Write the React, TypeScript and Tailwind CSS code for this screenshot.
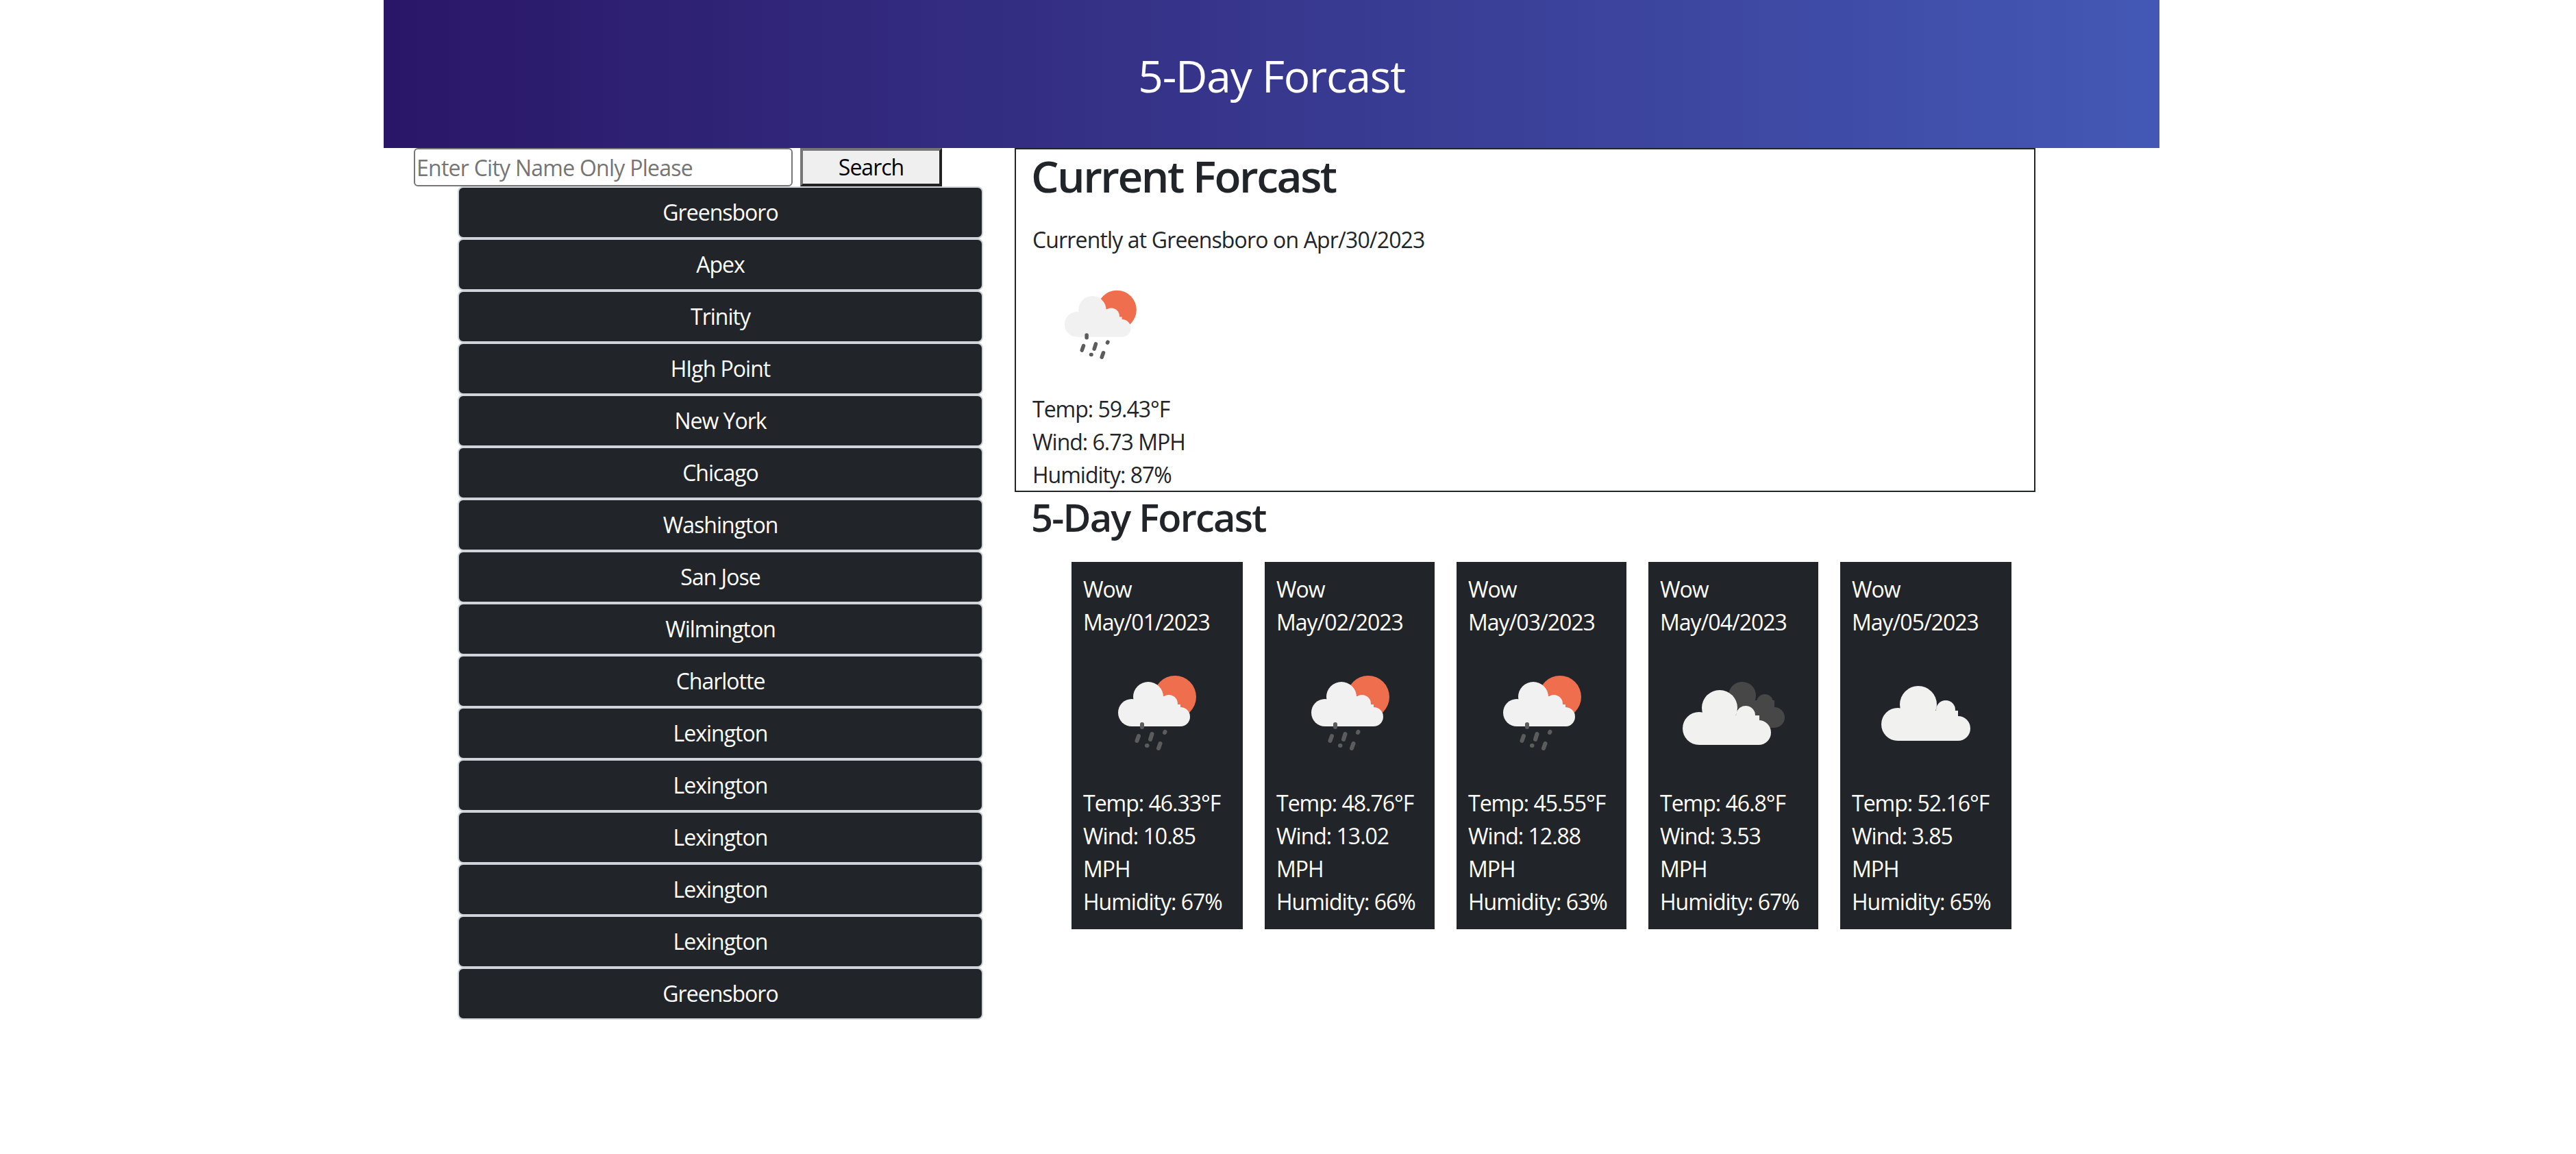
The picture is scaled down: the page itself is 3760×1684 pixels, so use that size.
import React from "react";

const cities = [
  "Greensboro",
  "Apex",
  "Trinity",
  "HIgh Point",
  "New York",
  "Chicago",
  "Washington",
  "San Jose",
  "Wilmington",
  "Charlotte",
  "Lexington",
  "Lexington",
  "Lexington",
  "Lexington",
  "Lexington",
  "Greensboro",
];

const days = [
  { date: "May/01/2023", icon: "rain", temp: "46.33", wind: "10.85", humidity: "67", width: "w-[250px]" },
  { date: "May/02/2023", icon: "rain", temp: "48.76", wind: "13.02", humidity: "66", width: "w-[248px]" },
  { date: "May/03/2023", icon: "rain", temp: "45.55", wind: "12.88", humidity: "63", width: "w-[248px]" },
  { date: "May/04/2023", icon: "broken", temp: "46.8", wind: "3.53", humidity: "67", width: "w-[248px]" },
  { date: "May/05/2023", icon: "scattered", temp: "52.16", wind: "3.85", humidity: "65", width: "w-[250px]" },
];

function RainIcon({ className = "w-[200px] h-[200px]" }: { className?: string }) {
  return (
    <svg viewBox="0 0 200 200" className={`block ${className}`}>
      <circle cx="134" cy="85" r="31" fill="#ee6e4d" />
      <g fill="#f1f1f1">
        <circle cx="71" cy="108" r="20" />
        <circle cx="95" cy="85" r="22" />
        <circle cx="125" cy="95" r="13" />
        <circle cx="142" cy="114" r="14" />
        <rect x="71" y="96" width="71" height="32" />
        <rect x="85" y="84" width="38" height="20" />
      </g>
      <g stroke="#5c5c5c" strokeWidth="6" strokeLinecap="round">
        <line x1="86" y1="125" x2="86" y2="129" />
        <line x1="78.5" y1="149" x2="81" y2="142" />
        <line x1="98" y1="147" x2="100.5" y2="139" />
        <line x1="119" y1="137" x2="119.5" y2="136" />
        <line x1="93" y1="156" x2="93.5" y2="156" />
        <line x1="110" y1="160" x2="112.5" y2="153" />
      </g>
    </svg>
  );
}

function BrokenIcon() {
  return (
    <svg viewBox="0 0 200 200" className="block w-[200px] h-[200px]">
      <g fill="#474747">
        <circle cx="120" cy="83" r="20" />
        <circle cx="153" cy="93" r="12" />
        <circle cx="167" cy="115" r="15" />
        <rect x="120" y="90" width="47" height="40" />
      </g>
      <g fill="#f1f1f0">
        <circle cx="57" cy="131" r="24" />
        <circle cx="87" cy="101" r="26" />
        <circle cx="125" cy="112" r="14" />
        <circle cx="144" cy="137" r="18" />
        <rect x="57" y="112" width="88" height="43" />
      </g>
    </svg>
  );
}

function ScatteredIcon() {
  return (
    <svg viewBox="0 0 200 200" className="block w-[200px] h-[200px]">
      <g fill="#f1f1f0">
        <circle cx="67" cy="125" r="24" />
        <circle cx="97" cy="96" r="27" />
        <circle cx="137" cy="104" r="14" />
        <circle cx="155" cy="131" r="18" />
        <rect x="67" y="105" width="88" height="44" />
      </g>
    </svg>
  );
}

function WeatherIcon({ icon }: { icon: string }) {
  if (icon === "broken") return <BrokenIcon />;
  if (icon === "scattered") return <ScatteredIcon />;
  return <RainIcon />;
}

export default function App() {
  return (
    <div className="min-h-[1684px] bg-white font-['Open_Sans',sans-serif] text-[32px] leading-[48px] text-[#212529] tracking-[-1px]">
      <div className="ml-[560px] w-[2592px]">
        <header className="h-[216px] flex items-center justify-center bg-gradient-to-r from-[#2a1668] to-[#4358b5]">
          <h1 className="text-[64px] leading-[77px] text-white pt-[4px] tracking-[-1.2px]">5-Day Forcast</h1>
        </header>

        <div className="flex">
          <aside className="w-[921px] shrink-0">
            <div className="flex gap-[11px] pl-[44px] h-[56px]">
              <input
                placeholder="Enter City Name Only Please"
                className="w-[553px] h-[56px] px-[2px] border-2 border-[#767676] rounded-[6px] text-[32px] tracking-[-0.75px] text-black outline-none placeholder:text-[#757575]"
              />
              <button className="w-[207px] h-[56px] bg-[#efefef] text-black border-4 border-t-[#767676] border-l-[#767676] border-r-[#222] border-b-[#222] leading-[40px]">
                Search
              </button>
            </div>
            <ul className="ml-[108px] w-[767px]">
              {cities.map((city, i) => (
                <li key={i}>
                  <button className="block w-full h-[76px] bg-[#212529] text-white border-2 border-[#ced4da] rounded-[8px]">
                    {city}
                  </button>
                </li>
              ))}
            </ul>
          </aside>

          <main className="w-[1490px]">
            <section className="h-[502px] border-2 border-[#212529] px-[24px]">
              <h2 className="-ml-[2px] text-[64px] leading-[77px] font-semibold tracking-[-2.5px] mb-[31px]">Current Forcast</h2>
              <p className="tracking-[-0.85px]">Currently at Greensboro on Apr/30/2023</p>
              <div className="h-[199px]">
                <RainIcon className="w-[184px] h-[184px]" />
              </div>
              <p>Temp: 59.43°F</p>
              <p>Wind: 6.73 MPH</p>
              <p>Humidity: 87%</p>
            </section>

            <h3 className="px-[24px] text-[56px] leading-[67px] font-semibold tracking-[-1.8px] mt-[3px] mb-[32px]">5-Day Forcast</h3>

            <div className="flex gap-[32px] ml-[83px]">
              {days.map((day) => (
                <div key={day.date} className={`${day.width} h-[536px] bg-[#212529] text-white p-[16px] pl-[17px]`}>
                  <p>Wow</p>
                  <p>{day.date}</p>
                  <div className="h-[216px]">
                    <WeatherIcon icon={day.icon} />
                  </div>
                  <p>Temp: {day.temp}°F</p>
                  <p>Wind: {day.wind} MPH</p>
                  <p>Humidity: {day.humidity}%</p>
                </div>
              ))}
            </div>
          </main>
        </div>
      </div>
    </div>
  );
}
